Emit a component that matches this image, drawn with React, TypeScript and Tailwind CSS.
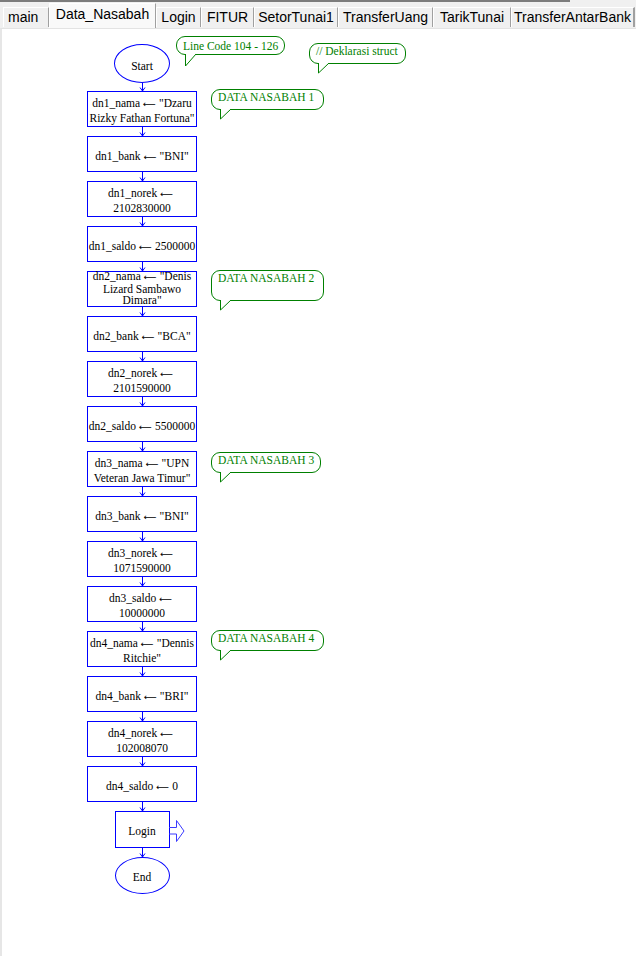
import React from 'react';

const tabs = [
  { name: 'main', cls: 'w-[46px] justify-start pl-[4px]' },
  { name: 'Data_Nasabah', cls: 'w-[107px] justify-center', active: true },
  { name: 'Login', cls: 'w-[45px] justify-center' },
  { name: 'FITUR', cls: 'w-[53px] justify-center' },
  { name: 'SetorTunai1', cls: 'w-[84px] justify-center' },
  { name: 'TransferUang', cls: 'w-[95px] justify-center' },
  { name: 'TarikTunai', cls: 'w-[78px] justify-center' },
  { name: 'TransferAntarBank', cls: 'w-[124px] justify-center' },
];

// each line: [left, right]; an arrow sits between them when right is given
const steps: [string, string?][][] = [
  [['dn1_nama', '"Dzaru'], ['Rizky Fathan Fortuna"']],
  [['dn1_bank', '"BNI"']],
  [['dn1_norek', ''], ['2102830000']],
  [['dn1_saldo', '2500000']],
  [['dn2_nama', '"Denis'], ['Lizard Sambawo'], ['Dimara"']],
  [['dn2_bank', '"BCA"']],
  [['dn2_norek', ''], ['2101590000']],
  [['dn2_saldo', '5500000']],
  [['dn3_nama', '"UPN'], ['Veteran Jawa Timur"']],
  [['dn3_bank', '"BNI"']],
  [['dn3_norek', ''], ['1071590000']],
  [['dn3_saldo', ''], ['10000000']],
  [['dn4_nama', '"Dennis'], ['Ritchie"']],
  [['dn4_bank', '"BRI"']],
  [['dn4_norek', ''], ['102008070']],
  [['dn4_saldo', '0']],
];

const Arrow = () => (
  <span className="mx-[3px] font-['DejaVu_Sans',sans-serif] text-[9px]">⟵</span>
);

const Connector = ({ h }: { h: number }) => (
  <svg width={9} height={h} className="block">
    <line x1={4.5} y1={0} x2={4.5} y2={h} stroke="#0000ff" strokeWidth={1} />
    <polyline points={`2,${h - 3.5} 4.5,${h} 7,${h - 3.5}`} fill="none" stroke="#0000ff" strokeWidth={1} />
  </svg>
);

const Note = ({
  className,
  tail = 10,
  children,
}: {
  className: string;
  tail?: number;
  children: React.ReactNode;
}) => (
  <div
    className={`absolute rounded-[9px] border border-[#008000] bg-white pl-[6px] text-[11.5px] leading-[12px] whitespace-nowrap text-[#008000] ${className}`}
  >
    {children}
    <svg className="absolute left-[7px] top-full" width={14} height={tail + 1}>
      <polygon points={`1.5,0 1.5,${tail} 12,0`} fill="white" />
      <polyline points={`1.5,0 1.5,${tail} 12,0`} fill="none" stroke="#008000" strokeWidth={1} />
    </svg>
  </div>
);

export default function App() {
  return (
    <div className="relative h-[956px] w-[636px] overflow-hidden bg-white font-['Liberation_Serif',serif] text-black">
      {/* tab strip */}
      <div className="h-[28px] bg-[#f0f0f0]">
        <div className="h-[2px] w-[570px] bg-[#7c7c7c]" />
        <div className="flex h-[26px] items-end pl-[3px] font-['Liberation_Sans',sans-serif] text-[14px] leading-[16px]">
          {tabs.map((t) =>
            t.active ? (
              <div
                key={t.name}
                className={`flex h-[25px] items-start border-t border-l border-r border-t-white border-l-white border-r-[#a0a0a0] bg-[#f9f9f9] pt-[2px] ${t.cls}`}
              >
                {t.name}
              </div>
            ) : (
              <div
                key={t.name}
                className={`mb-[1px] flex h-[20px] items-start border-t border-l border-r border-t-white border-l-white border-r-[#a0a0a0] bg-[#f0f0f0] pt-[1px] ${t.cls} ${
                  t.name === 'TransferAntarBank' ? 'border-r-2 border-r-[#6a6a6a]' : ''
                }`}
              >
                {t.name}
              </div>
            )
          )}
        </div>
      </div>

      {/* canvas */}
      <div className="h-[928px] border-t border-l-2 border-t-[#e3e3e3] border-l-[#e6e6e6] pt-[15px] pl-[85px]">
        <div className="flex w-[110px] flex-col items-center text-[11.5px] leading-[14px]">
          <div className="flex h-[39px] w-[56px] items-center justify-center rounded-[50%] border border-[#0000ff] pt-[4px]">
            Start
          </div>
          <Connector h={8} />
          {steps.map((lines, i) => (
            <React.Fragment key={i}>
              <div
                className={`flex h-[36px] w-[110px] flex-col items-center justify-center border border-[#0000ff] text-center whitespace-nowrap ${
                  lines.length === 3 ? 'leading-[11.5px]' : lines.length === 1 ? 'pt-[4px]' : 'pt-[2px]'
                }`}
              >
                {lines.map(([a, b], j) => (
                  <span key={j}>
                    {a}
                    {b !== undefined && <Arrow />}
                    {b}
                  </span>
                ))}
              </div>
              <Connector h={9} />
            </React.Fragment>
          ))}
          <div className="relative flex h-[37px] w-[55px] items-center justify-center border border-[#0000ff] pt-[2px]">
            Login
            <svg className="absolute top-[7px] left-full" width={17} height={24}>
              <path
                d="M0,8.5 H7.5 V1.5 L15,12 L7.5,22.5 V15 H0"
                fill="none"
                stroke="#3a3aff"
                strokeWidth={1}
              />
            </svg>
          </div>
          <Connector h={9} />
          <div className="flex h-[37px] w-[55px] items-center justify-center rounded-[50%] border border-[#0000ff] pt-[2px]">
            End
          </div>
        </div>
      </div>

      {/* comments */}
      <Note className="top-[36px] left-[176px] h-[19px] w-[109px] pt-[3px]" tail={12}>
        Line Code 104 - 126
      </Note>
      <Note className="top-[43px] left-[309px] h-[21px] w-[97px] pt-[1px]">// Deklarasi struct</Note>
      <Note className="top-[89px] left-[211px] h-[21px] w-[113px] pt-[1px]">DATA NASABAH 1</Note>
      <Note className="top-[270px] left-[211px] h-[31px] w-[113px] pt-[1px]">DATA NASABAH 2</Note>
      <Note className="top-[452px] left-[211px] h-[21px] w-[110px] pt-[1px]">DATA NASABAH 3</Note>
      <Note className="top-[630px] left-[211px] h-[21px] w-[113px] pt-[1px]">DATA NASABAH 4</Note>
    </div>
  );
}
